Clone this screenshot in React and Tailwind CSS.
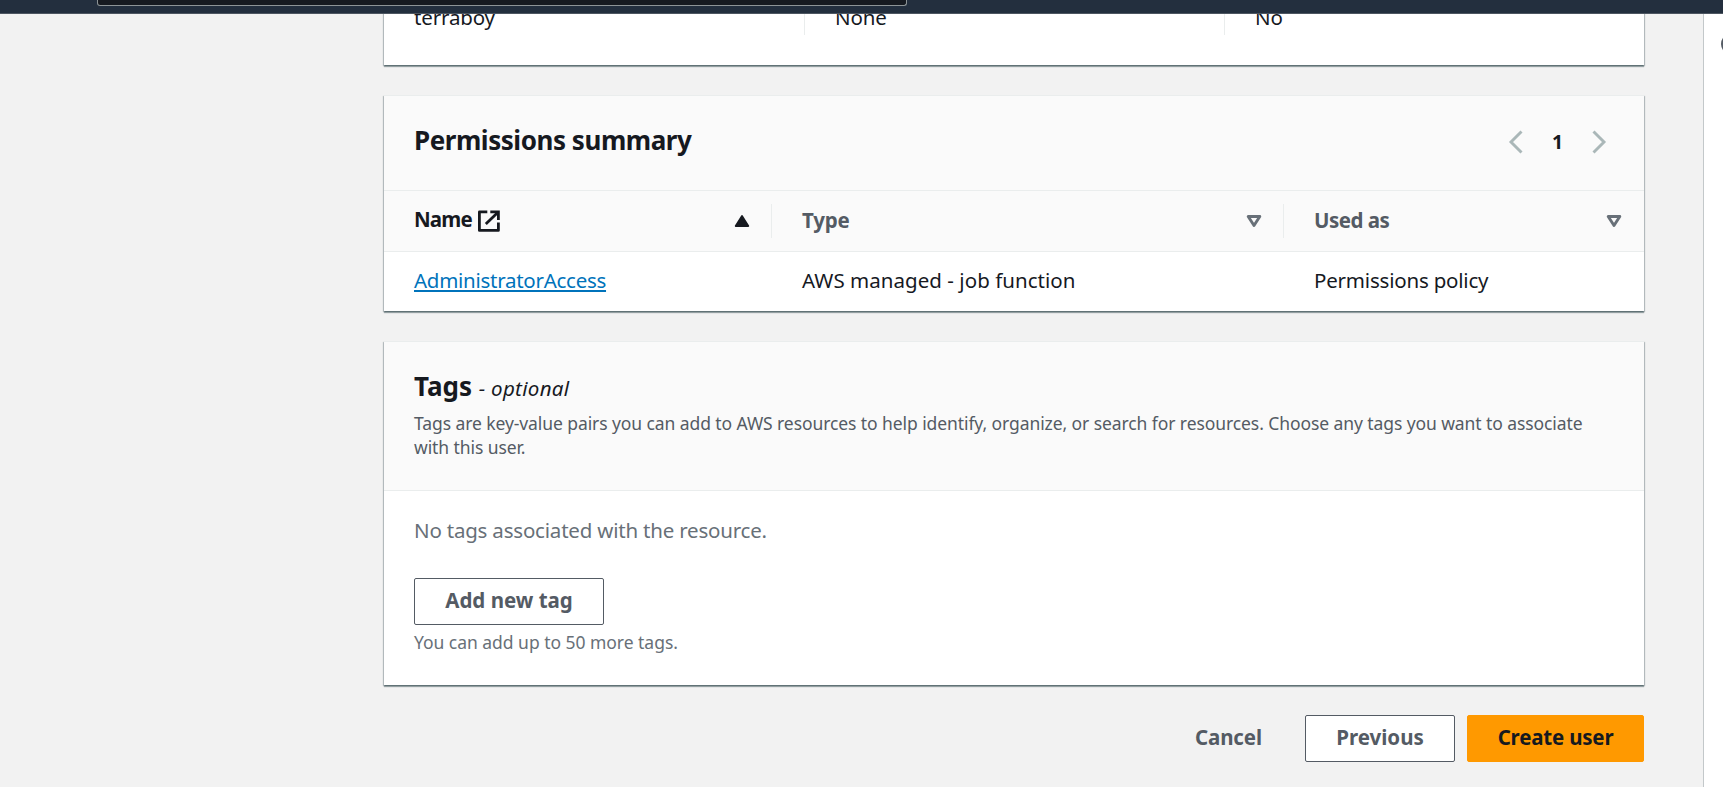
const cardShadow =
  'shadow-[0_2px_1px_0_rgba(0,28,36,0.34),1px_1px_1px_0_rgba(0,28,36,0.22),-1px_1px_1px_0_rgba(0,28,36,0.22)]';

function Card({ className, children }) {
  return <section className={`${cardShadow} bg-white ${className}`}>{children}</section>;
}

function Button({ primary, className, children }) {
  return (
    <button
      className={`flex h-[47px] items-center justify-center rounded-[2px] border pb-[3px] font-bold ${
        primary ? 'border-[#ff9900] bg-[#ff9900] text-[#16191f]' : 'border-[#545b64] bg-white text-[#545b64]'
      } ${className}`}
    >
      {children}
    </button>
  );
}

function Chevron({ right }) {
  return (
    <svg className="h-6 w-4 shrink-0" viewBox="0 0 16 24" fill="none" stroke="#aab7b8" strokeWidth="2.9">
      {right ? <path d="M2.5 1.5 13 12 2.5 22.5" /> : <path d="M13.5 1.5 3 12 13.5 22.5" />}
    </svg>
  );
}

function CaretUp() {
  return (
    <svg className="h-4 w-4" viewBox="0 0 16 16">
      <path d="M8 3 14.3 13H1.7Z" fill="#16191f" stroke="#16191f" strokeWidth="1.8" strokeLinejoin="round" />
    </svg>
  );
}

function CaretDown() {
  return (
    <svg className="h-4 w-4" viewBox="0 0 16 16">
      <path d="M2.2 3.5H13.8L8 12.5Z" fill="none" stroke="#687078" strokeWidth="2.9" strokeLinejoin="round" />
    </svg>
  );
}

function ExternalIcon() {
  return (
    <svg className="h-[22px] w-[22px]" viewBox="0 0 22 22" fill="none" stroke="#16191f" strokeWidth="2.8">
      <path d="M9.3 1.9H1.4V20.4H20.4V12.6" strokeLinejoin="round" />
      <path d="M12.3 1.9H20.4V10" />
      <path d="M20 2.3 7.8 14" />
    </svg>
  );
}

export default function App() {
  return (
    <div className="flex h-[787px] w-full flex-col overflow-hidden bg-[#f2f2f2] font-['Noto_Sans',sans-serif] text-[20.5px] leading-7 text-[#16191f]">
      <header className="z-10 h-[14px] shrink-0 border-b border-[#4d5661] bg-[#232f3e] pl-[97px]">
        <div className="h-[6px] w-[810px] rounded-b-[3px] border border-t-0 border-[#8d9496] bg-[#161a20]" />
      </header>

      <div className="flex min-h-0 flex-1">
        <main className="ml-[384px] w-[1260px] shrink-0">
          <Card className="-mt-[14px] h-[65px] pt-[3px]">
            <div className="flex h-[32px] pl-[30px]">
              <div className="w-[390px] tracking-[-0.15px]">terraboy</div>
              <div className="w-[420px] border-l border-[#eaeded] pl-[30px] tracking-[-0.15px]">None</div>
              <div className="border-l border-[#eaeded] pl-[30px] tracking-[-0.15px]">No</div>
            </div>
          </Card>

          <Card className="mt-[30px] h-[216px] border-t border-[#eaeded]">
            <div className="flex h-[95px] items-start justify-between border-b border-[#eaeded] bg-[#fafafa] pl-[30px] pr-[37px]">
              <h2 className="pt-[26px] text-[26px] font-bold leading-9 tracking-[-0.45px]">Permissions summary</h2>
              <div className="flex items-center pt-[34px]">
                <Chevron />
                <span className="w-[67px] text-center text-[19.5px] font-bold leading-6">1</span>
                <Chevron right />
              </div>
            </div>
            <div className="flex h-[61px] items-center border-b border-[#eaeded] bg-[#fafafa] font-bold text-[#545b64]">
              <div className="flex h-[34px] w-[388px] items-center justify-between border-r border-[#eaeded] pl-[30px] pr-[21px]">
                <div className="flex items-center gap-[6px] text-[#16191f]">
                  <span className="pb-[5px] tracking-[-0.8px]">Name</span>
                  <ExternalIcon />
                </div>
                <CaretUp />
              </div>
              <div className="flex h-[34px] w-[512px] items-center justify-between border-r border-[#eaeded] pl-[30px] pr-[21px]">
                <span className="pb-[2px] tracking-[-0.2px]">Type</span>
                <CaretDown />
              </div>
              <div className="flex h-[34px] w-[360px] items-center justify-between pl-[30px] pr-[22px]">
                <span className="pb-[2px] tracking-[-0.5px]">Used as</span>
                <CaretDown />
              </div>
            </div>
            <div className="flex pt-[14px]">
              <div className="w-[388px] pl-[30px]">
                <a className="tracking-[-0.27px] text-[#0073bb] underline decoration-2 underline-offset-2">AdministratorAccess</a>
              </div>
              <div className="w-[512px] pl-[30px] tracking-[0.04px]">AWS managed - job function</div>
              <div className="pl-[30px] tracking-[-0.2px]">Permissions policy</div>
            </div>
          </Card>

          <Card className="mt-[30px] h-[344px] border-t border-[#eaeded]">
            <div className="h-[149px] border-b border-[#eaeded] bg-[#fafafa] px-[30px] pt-[26px]">
              <h2 className="text-[26px] font-bold leading-9">
                Tags <span className="text-[20.5px] font-normal italic tracking-[0.3px]">- optional</span>
              </h2>
              <p className="pt-[5px] text-[17.5px] leading-6 tracking-[-0.085px] text-[#545b64]">
                Tags are key-value pairs you can add to AWS resources to help identify, organize, or search for
                resources. Choose any tags you want to associate with this user.
              </p>
            </div>
            <div className="px-[30px] pt-[25px] text-[#687078]">
              <p className="tracking-[-0.2px]">No tags associated with the resource.</p>
              <Button className="mt-[34px] w-[190px]">Add new tag</Button>
              <p className="pt-[5px] text-[17.5px] leading-6 tracking-[-0.03px]">You can add up to 50 more tags.</p>
            </div>
          </Card>

          <footer className="flex items-center justify-end pt-[30px]">
            <span className="pb-[3px] pr-[43px] font-bold tracking-[-0.1px] text-[#545b64]">Cancel</span>
            <Button className="mr-3 w-[150px]">Previous</Button>
            <Button primary className="w-[177px] tracking-[-0.2px]">
              Create user
            </Button>
          </footer>
        </main>

        <aside className="ml-auto flex w-5 shrink-0 items-start overflow-hidden border-l border-[#c3c8ca] bg-white pl-[17px] pt-[19px]">
          <svg className="h-[22px] w-[22px] shrink-0" viewBox="0 0 22 22" fill="none" stroke="#545b64" strokeWidth="2.6">
            <circle cx="11" cy="11" r="9.7" />
            <path d="M11 10V16M11 6V8" />
          </svg>
        </aside>
      </div>
    </div>
  );
}
